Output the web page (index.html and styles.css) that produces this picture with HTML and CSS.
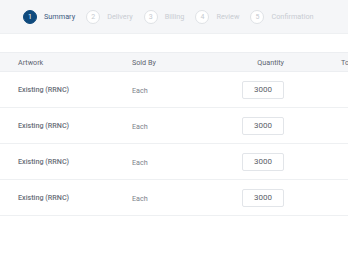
FILE: index.html
```html
<!DOCTYPE html>
<html>
<head>
<meta charset="utf-8">
<link rel="stylesheet" href="styles.css">
</head>
<body>
<div class="steps">
  <div class="step active"><span class="num">1</span><span class="label">Summary</span></div>
  <div class="step"><span class="num">2</span><span class="label">Delivery</span></div>
  <div class="step"><span class="num">3</span><span class="label">Billing</span></div>
  <div class="step"><span class="num">4</span><span class="label">Review</span></div>
  <div class="step"><span class="num">5</span><span class="label">Confirmation</span></div>
</div>
<div class="table">
  <div class="row head">
    <div class="cell">Artwork</div>
    <div class="cell">Sold By</div>
    <div class="cell qty">Quantity</div>
    <div class="cell total">Total</div>
  </div>
  <div class="row">
    <div class="cell art">Existing (RRNC)</div>
    <div class="cell sold">Each</div>
    <div class="cell qty"><span class="input">3000</span></div>
    <div class="cell total"></div>
  </div>
  <div class="row">
    <div class="cell art">Existing (RRNC)</div>
    <div class="cell sold">Each</div>
    <div class="cell qty"><span class="input">3000</span></div>
    <div class="cell total"></div>
  </div>
  <div class="row">
    <div class="cell art">Existing (RRNC)</div>
    <div class="cell sold">Each</div>
    <div class="cell qty"><span class="input">3000</span></div>
    <div class="cell total"></div>
  </div>
  <div class="row">
    <div class="cell art">Existing (RRNC)</div>
    <div class="cell sold">Each</div>
    <div class="cell qty"><span class="input">3000</span></div>
    <div class="cell total"></div>
  </div>
</div>
</body>
</html>
```

FILE: styles.css
```css
html, body {
  margin: 0;
  padding: 0;
  background: #ffffff;
  width: 348px;
  height: 268px;
  overflow: hidden;
  font-family: Roboto, "Liberation Sans", sans-serif;
}

.steps {
  height: 34px;
  background: #f5f6f8;
  border-bottom: 1px solid #eef0f2;
  box-sizing: border-box;
  display: flex;
  align-items: center;
  padding-left: 23px;
  gap: 11px;
}

.step {
  display: flex;
  align-items: center;
  gap: 7px;
}

.num {
  width: 14px;
  height: 14px;
  box-sizing: border-box;
  border-radius: 50%;
  border: 1px solid #dfe2e6;
  background: #ffffff;
  color: #c5cad0;
  font-size: 7px;
  display: flex;
  align-items: center;
  justify-content: center;
}

.label {
  font-size: 7.3px;
  color: #c8ccd2;
}

.step.active .num {
  background: #0f4a7d;
  border-color: #0f4a7d;
  color: #ffffff;
}

.step.active .label {
  color: #3e5c82;
}

.table {
  margin-top: 18px;
  width: 420px;
}

.row {
  display: grid;
  grid-template-columns: 114px 110px 42px 100px;
  padding-left: 18px;
  height: 36px;
  align-items: center;
  border-bottom: 1px solid #eef0f2;
  box-sizing: border-box;
}

.row.head {
  height: 20px;
  background: #f5f6f8;
  border-top: 1px solid #eceef1;
  border-bottom: 1px solid #eceef1;
  font-size: 7.2px;
  color: #5d6570;
}

.cell.qty {
  display: flex;
  justify-content: flex-end;
  white-space: nowrap;
}

.cell.total {
  padding-left: 57px;
}

.art {
  font-size: 7.2px;
  font-weight: 500;
  color: #6a7079;
}

.sold {
  font-size: 7.2px;
  color: #7b828b;
  margin-top: 2px;
}

.input {
  width: 42px;
  height: 18px;
  box-sizing: border-box;
  border: 1px solid #e2e5e9;
  border-radius: 2px;
  display: flex;
  align-items: center;
  justify-content: center;
  font-size: 8px;
  color: #5c6269;
}
```
